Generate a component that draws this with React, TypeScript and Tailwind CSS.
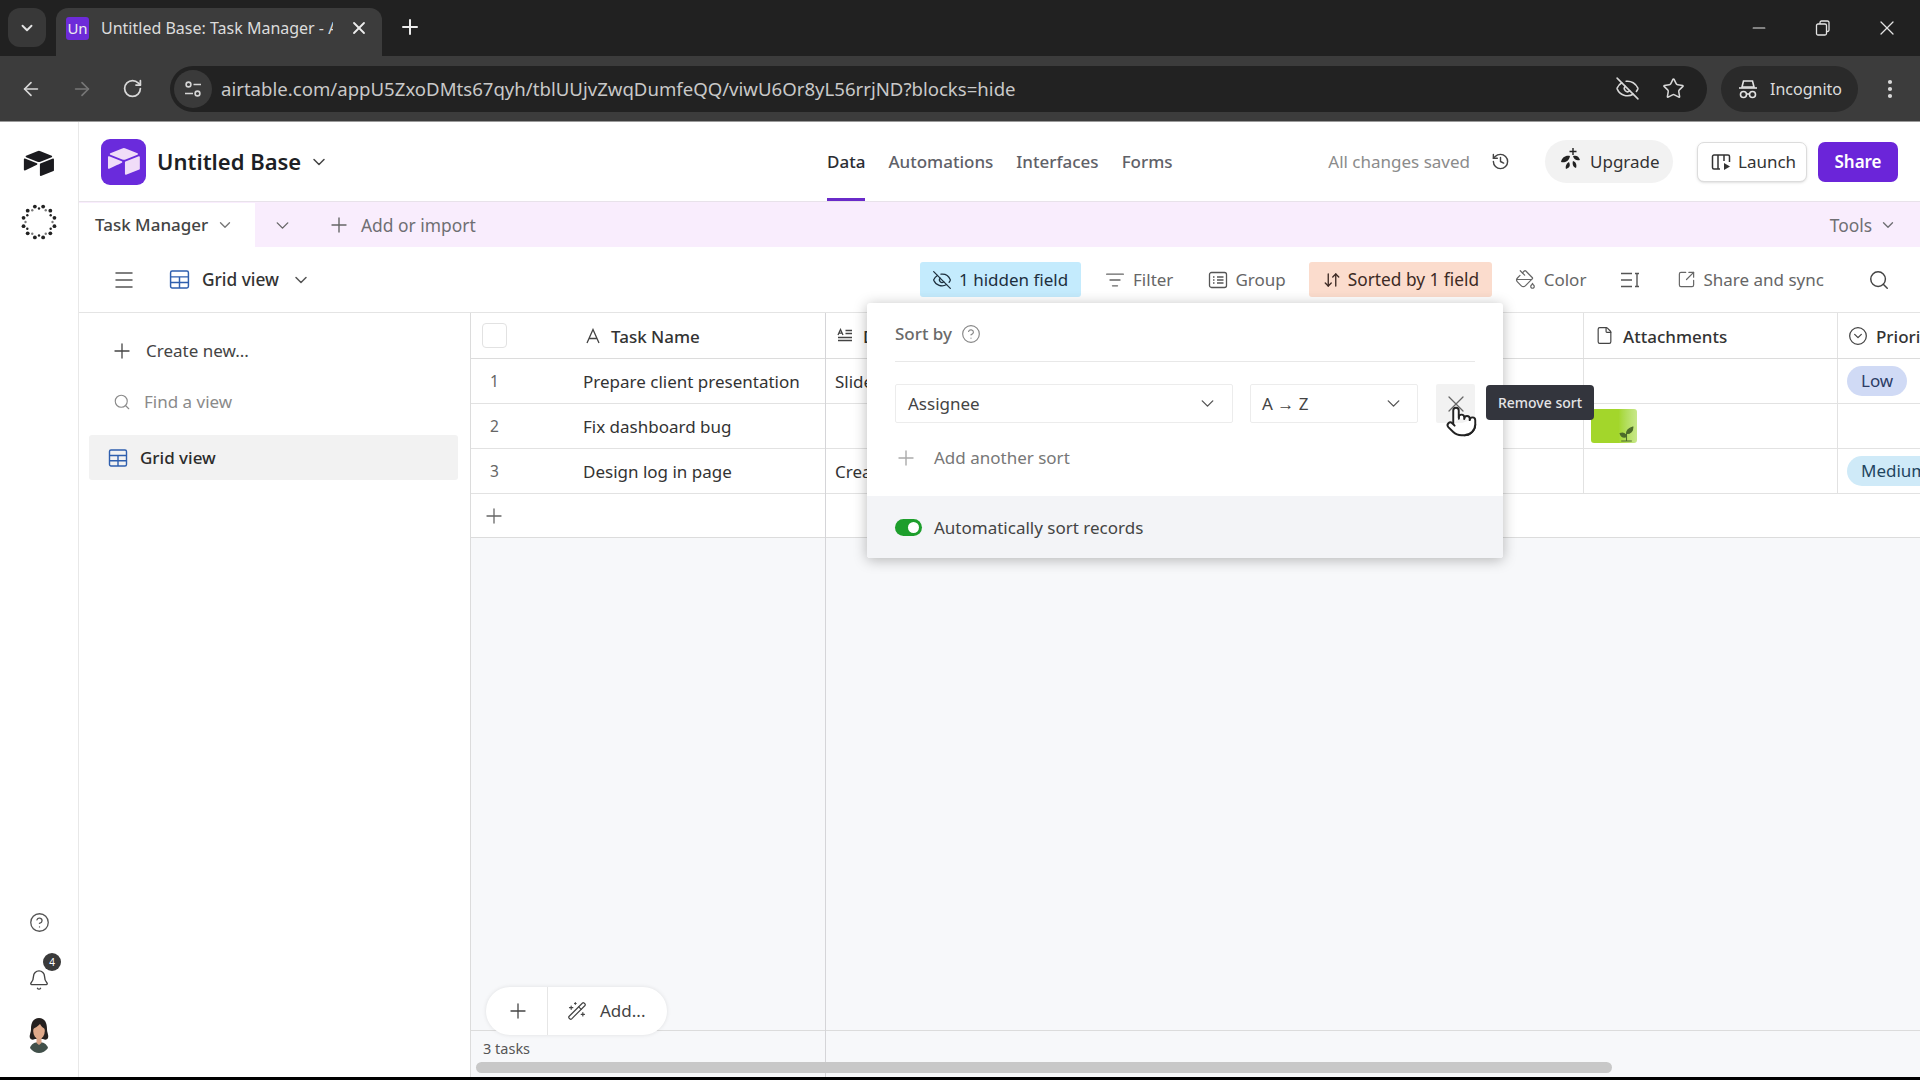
import {
  ArrowLeft,
  ArrowRight,
  Bell,
  ChevronDown,
  CircleChevronDown,
  CircleHelp,
  EyeOff,
  File,
  History,
  ListFilter,
  Menu,
  Minus,
  MoreVertical,
  PaintBucket,
  Plus,
  Pointer,
  RotateCw,
  Search,
  SquareArrowOutUpRight,
  Star,
  ArrowDownUp,
  WandSparkles,
  X,
} from "lucide-react";

function AirtableMark({ className }: { className?: string }) {
  return (
    <svg viewBox="0 0 200 170" className={className} fill="currentColor">
      <path d="M90.039 12.368 24.079 39.66c-3.667 1.519-3.63 6.729.062 8.192l66.235 26.266a24.58 24.58 0 0 0 18.12 0l66.236-26.266c3.69-1.463 3.729-6.673.06-8.191l-65.958-27.293a24.58 24.58 0 0 0-18.795 0" />
      <path d="M105.312 88.46v65.617c0 3.12 3.147 5.258 6.048 4.108l73.806-28.648a4.42 4.42 0 0 0 2.79-4.108V59.813c0-3.121-3.147-5.258-6.048-4.108l-73.806 28.648a4.42 4.42 0 0 0-2.79 4.108" />
      <path d="M88.078 91.846l-21.904 10.576-2.224 1.075-46.238 22.155c-2.93 1.414-6.672-.722-6.672-3.978V60.088c0-1.178.604-2.195 1.414-2.96a5 5 0 0 1 1.12-.84c1.104-.663 2.68-.84 4.02-.31L87.71 83.76c3.564 1.414 3.844 6.408.368 8.087" />
    </svg>
  );
}

function DotRing() {
  const dots = Array.from({ length: 24 }, (_, i) => {
    const a = (i / 24) * Math.PI * 2;
    const rad = i % 2 ? 16 : 13.5;
    return { x: 18 + Math.cos(a) * rad, y: 18 + Math.sin(a) * rad, r: i % 2 ? 1.9 : 1.2 };
  });
  return (
    <svg viewBox="0 0 36 36" className="w-9 h-9 text-[#222]" fill="currentColor">
      {dots.map((d, i) => (
        <circle key={i} cx={d.x} cy={d.y} r={d.r} opacity={i % 4 === 0 ? 0.6 : 1} />
      ))}
    </svg>
  );
}

function GridIcon({ className }: { className?: string }) {
  return (
    <svg viewBox="0 0 20 20" className={className} fill="none" stroke="#2f5fae" strokeWidth="1.4">
      <rect x="1.5" y="2" width="17" height="16" rx="1.5" />
      <path d="M1.5 7.5h17M1.5 12.8h17M10 7.5V18" />
    </svg>
  );
}

function SiteInfoIcon() {
  return (
    <svg viewBox="0 0 20 20" className="w-5 h-5" fill="none" stroke="#d5d5d5" strokeWidth="1.6">
      <circle cx="5.5" cy="5.5" r="2.4" />
      <path d="M10.5 5.5H18M2 14.5h8" />
      <circle cx="14.5" cy="14.5" r="2.4" />
    </svg>
  );
}

function IncognitoIcon() {
  return (
    <svg viewBox="0 0 22 22" className="w-[22px] h-[22px]" fill="none" stroke="#e3e3e3" strokeWidth="1.6">
      <path d="M6.5 3h9l1.5 6H5z" />
      <path d="M2 10h18" />
      <circle cx="6.5" cy="16.5" r="3" />
      <circle cx="15.5" cy="16.5" r="3" />
      <path d="M9.5 16h3" />
    </svg>
  );
}

function GroupIcon() {
  return (
    <svg viewBox="0 0 20 20" className="w-5 h-5" fill="none" stroke="#555" strokeWidth="1.3">
      <rect x="1.5" y="2.5" width="17" height="15" rx="2" />
      <path d="M5 7h1.5M9 7h6.5M5 10h1.5M9 10h6.5M5 13h1.5M9 13h6.5" />
    </svg>
  );
}

function RowHeightIcon() {
  return (
    <svg viewBox="0 0 20 20" className="w-5 h-5" fill="none" stroke="#555" strokeWidth="1.4">
      <path d="M1 3.5h11M1 10h11M1 16.5h11M15 3.5h4M15 16.5h4M17 3.5v13" />
    </svg>
  );
}

function LaunchIcon() {
  return (
    <svg viewBox="0 0 20 20" className="w-5 h-5" fill="none" stroke="#333" strokeWidth="1.5">
      <path d="M9 17H3a1.5 1.5 0 0 1-1.5-1.5v-11A1.5 1.5 0 0 1 3 3h14a1.5 1.5 0 0 1 1.5 1.5V10M7 3v14M13 3v6" />
      <path d="M13 11l6 3.5-6 3.5z" fill="#333" stroke="none" />
    </svg>
  );
}

function UpgradeIcon() {
  return (
    <svg viewBox="0 0 22 24" className="w-[22px] h-6 -mt-[5px]" fill="#222">
      <path d="M10 9c-4-1-8 1-9 6 3 1 8 0 9-6zM13 9c3-1 6 0 7 4-3 1-6 0-7-4zM9 15c-2 1-4 4-3 7 3-1 5-3 3-7zM13 14c-1 3 0 6 3 7 1-3 0-6-3-7z" />
      <path d="M13 1v7M9.5 4.500h7" stroke="#222" strokeWidth="1.400" fill="none" />
    </svg>
  );
}

function NameFieldIcon() {
  return (
    <svg viewBox="0 0 16 16" className="w-4 h-4" fill="none" stroke="#444" strokeWidth="1.3">
      <path d="M2 15 8 1.500 14 15M4.200 10.500h7.600" />
    </svg>
  );
}

function LongTextIcon() {
  return (
    <svg viewBox="0 0 16 16" className="w-4 h-4" fill="none" stroke="#444" strokeWidth="1.300">
      <path d="M1 7 3.500 1.500 6 7M2 5.200h3M8.500 2.500H15M8.500 5.500H15M1 9.500h14M1 12.500h14" />
    </svg>
  );
}

function Avatar() {
  return (
    <svg viewBox="0 0 28 36" className="w-[28px] h-9">
      <path d="M5 31c1-4 5-6 9-6s8 2 9 6c-2 3-6 5-9 5s-7-2-9-5z" fill="#41504a" />
      <path d="M14 1C8 1 6 6 6 12c0 4-2 6-1 9 1 2 3 2 5 1h8c2 1 4 1 5-1 1-3-1-5-1-9 0-6-2-11-8-11z" fill="#25201f" />
      <path d="M11.500 19h5v7l-2.500 2-2.500-2z" fill="#d7a285" />
      <ellipse cx="14" cy="14" rx="5.800" ry="8" fill="#dfa98a" />
      <path d="M8 12c2-1 5-3 7-5 1 2 3 4 5 5 0-5-2-8-6-8s-6 3-6 8z" fill="#25201f" />
    </svg>
  );
}

function PlantThumb() {
  return (
    <div className="w-[46px] h-[34px] rounded-[3px] bg-gradient-to-r from-[#a3d62b] from-60% to-[#c8e889] flex items-end justify-end pr-[2px] pb-[1px]">
      <svg viewBox="0 0 16 16" className="w-[17px] h-[17px]" fill="#4c6b2a">
        <path d="M8 15V8M2 8c3-1 5 0 6 3-3 1-5 0-6-3zM8 8c0-3 3-5 6-6 0 4-2 6-6 6zM3 15h10" stroke="#4c6b2a" strokeWidth="1" />
      </svg>
    </div>
  );
}

function ChromeBar() {
  return (
    <>
      <div className="h-14 bg-[#212121] flex items-end pl-2 shrink-0">
        <div className="w-[38px] h-[39px] mb-[9px] rounded-xl bg-[#383838] flex items-center justify-center">
          <ChevronDown className="w-[18px] h-[18px] text-[#e3e3e3]" strokeWidth={2.5} />
        </div>
        <div className="ml-[10px] w-[326px] h-12 bg-[#3c3c3c] rounded-t-xl flex items-center pl-[10px] pb-[8px]">
          <div className="w-[23px] h-[23px] rounded-[3px] bg-[#6d2bd9] flex items-center justify-center text-[15px] text-[#eee]">Un</div>
          <span className="ml-3 w-[232px] overflow-hidden whitespace-nowrap text-[16px] text-[#dcdcdc]">Untitled Base: Task Manager - Airtable</span>
          <X className="ml-[16px] w-[20px] h-[20px] text-[#ececec]" strokeWidth={2.2} />
        </div>
        <Plus className="ml-[16px] mb-[17px] w-[24px] h-[24px] text-[#ececec]" strokeWidth={2} />
        <div className="ml-auto flex items-center h-12 mb-[4px] text-[#e3e3e3]">
          <Minus className="w-5 h-5" strokeWidth={1.4} />
          <svg viewBox="0 0 16 16" className="ml-[46px] w-[16px] h-[16px]" fill="none" stroke="#e3e3e3" strokeWidth="1.300">
            <rect x="1.500" y="4" width="10" height="11" rx="1.500" />
            <path d="M5 4V2.500A1.500 1.500 0 0 1 6.500 1h6A1.500 1.500 0 0 1 14 2.500V10a1.500 1.500 0 0 1-1.500 1.500h-1" />
          </svg>
          <X className="ml-[44px] mr-[21px] w-6 h-6" strokeWidth={1.3} />
        </div>
      </div>
      <div className="h-[66px] bg-[#3c3c3c] border-b border-[#9a9a9a] flex items-center shrink-0 pl-[20px]">
        <ArrowLeft className="w-[22px] h-[22px] text-[#d8d8d8]" strokeWidth={1.8} />
        <ArrowRight className="ml-[29px] w-[22px] h-[22px] text-[#777]" strokeWidth={1.8} />
        <RotateCw className="ml-[29px] w-[21px] h-[21px] text-[#d8d8d8]" strokeWidth={2} />
        <div className="ml-[27px] w-[1537px] h-[46px] bg-[#222222] rounded-full flex items-center">
          <div className="w-[38px] h-[38px] ml-1 rounded-full bg-[#3a3a3a] flex items-center justify-center">
            <SiteInfoIcon />
          </div>
          <span className="ml-[9px] text-[18.600px] text-[#c9c9c9] whitespace-nowrap">airtable.com/appU5ZxoDMts67qyh/tblUUjvZwqDumfeQQ/viwU6Or8yL56rrjND?blocks=hide</span>
          <EyeOff className="ml-auto w-[25px] h-[25px] text-[#d8d8d8]" strokeWidth={1.500} />
          <Star className="ml-[22px] mr-[22px] w-[23px] h-[23px] text-[#d8d8d8]" strokeWidth={1.600} />
        </div>
        <div className="ml-[14px] w-[137px] h-[46px] bg-[#2a2a2a] rounded-full flex items-center pl-[16px]">
          <IncognitoIcon />
          <span className="ml-[11px] text-[16px] text-[#dcdcdc]">Incognito</span>
        </div>
        <MoreVertical className="ml-[20px] w-[24px] h-[24px] text-[#d8d8d8]" strokeWidth={2.200} />
      </div>
    </>
  );
}

function Rail() {
  return (
    <div className="w-[79px] shrink-0 border-r border-[#e8e8e8] flex flex-col items-center pt-[27px] pb-[24px]">
      <AirtableMark className="w-[34px] h-[29px] text-[#1b1b1f]" />
      <div className="mt-[26px]">
        <DotRing />
      </div>
      <CircleHelp className="mt-auto w-[21px] h-[21px] text-[#555]" strokeWidth={1.500} />
      <div className="relative mt-[36px]">
        <Bell className="w-[22px] h-[22px] text-[#444]" strokeWidth={1.500} />
        <span className="absolute -top-[16px] left-[15px] w-[18px] h-[18px] rounded-full bg-[#3a3a3a] text-white text-[10px] flex items-center justify-center">4</span>
      </div>
      <div className="mt-[26px]">
        <Avatar />
      </div>
    </div>
  );
}

function TopHeader() {
  return (
    <div className="h-20 shrink-0 border-b border-[#e8e2ea] flex items-stretch pl-[22px] pr-[22px]">
      <div className="w-[726px] flex items-center">
        <div className="w-[45px] h-[46px] rounded-[9px] bg-[#6a2bdc] flex items-center justify-center">
          <AirtableMark className="w-[36px] h-[31px] text-[#f0dcf8]" />
        </div>
        <span className="ml-[11px] text-[22px] font-semibold text-[#1d1f25]">Untitled Base</span>
        <ChevronDown className="ml-[8px] w-[20px] h-[20px] text-[#444]" strokeWidth={1.800} />
      </div>
      <nav className="flex items-stretch gap-[23px] text-[17px] font-medium text-[#5f6168]">
        <div className="border-b-[3px] border-[#6a2bc9] flex items-center pt-[3px] text-[#2b2d33]">Data</div>
        <div className="flex items-center">Automations</div>
        <div className="flex items-center">Interfaces</div>
        <div className="flex items-center">Forms</div>
      </nav>
      <div className="ml-auto flex items-center">
        <span className="text-[17px] text-[#8b8b8b]">All changes saved</span>
        <History className="ml-[21px] w-[19px] h-[19px] text-[#444]" strokeWidth={1.800} />
        <div className="ml-[35px] w-[128px] h-[43px] rounded-full bg-[#f2f2f2] flex items-center pl-[15px] text-[17px] text-[#333]">
          <UpgradeIcon />
          <span className="ml-[8px]">Upgrade</span>
        </div>
        <div className="ml-[24px] w-[110px] h-[40px] rounded-[7px] border border-[#dcdcdc] bg-white shadow-sm flex items-center pl-[13px] text-[17px] text-[#333]">
          <LaunchIcon />
          <span className="ml-[7px]">Launch</span>
        </div>
        <div className="ml-[11px] w-[80px] h-[40px] rounded-[7px] bg-[#6b25d9] text-white text-[17px] font-semibold flex items-center justify-center">Share</div>
      </div>
    </div>
  );
}

function TableTabs() {
  return (
    <div className="h-[45px] shrink-0 flex items-stretch bg-[#f9edfd] text-[17px] pt-[1px]">
      <div className="w-[176px] bg-white flex items-center pl-[16px] font-medium text-[#444]">
        Task Manager
        <ChevronDown className="ml-[8px] w-[18px] h-[18px] text-[#777]" strokeWidth={1.800} />
      </div>
      <div className="flex items-center pl-[17px]">
        <ChevronDown className="w-[21px] h-[21px] text-[#666]" strokeWidth={1.600} />
        <Plus className="ml-[34px] w-[24px] h-[24px] text-[#666]" strokeWidth={1.400} />
        <span className="ml-[10px] text-[17.400px] text-[#6f6f73]">Add or import</span>
      </div>
      <div className="ml-auto flex items-center pr-[23px] text-[17.400px] text-[#6f6f73]">
        Tools
        <ChevronDown className="ml-[7px] w-[18px] h-[18px]" strokeWidth={1.800} />
      </div>
    </div>
  );
}

function ViewBar() {
  return (
    <div className="h-[66px] shrink-0 border-b border-[#e4e4e4] flex items-center text-[17px] text-[#666]">
      <Menu className="ml-[33px] w-[24px] h-[24px] text-[#555]" strokeWidth={1.500} />
      <GridIcon className="ml-[33px] w-[21px] h-[21px]" />
      <span className="ml-[12px] text-[17.300px] font-medium text-[#333]">Grid view</span>
      <ChevronDown className="ml-[12px] w-[20px] h-[20px] text-[#555]" strokeWidth={1.800} />
      <div className="ml-[609px] w-[161px] h-[35px] rounded-[3px] bg-[#c4ebfd] flex items-center pl-[12px] text-[#1d2f3d]">
        <EyeOff className="w-5 h-5" strokeWidth={1.500} />
        <span className="ml-[7px]">1 hidden field</span>
      </div>
      <ListFilter className="ml-[24px] w-5 h-5 text-[#666]" strokeWidth={1.600} />
      <span className="ml-[8px]">Filter</span>
      <div className="ml-[35px]"><GroupIcon /></div>
      <span className="ml-[7px]">Group</span>
      <div className="ml-[23px] w-[183px] h-[35px] rounded-[3px] bg-[#fbdccd] flex items-center pl-[14px] text-[#3d2a24]">
        <ArrowDownUp className="w-[18px] h-[18px]" strokeWidth={1.800} />
        <span className="ml-[7px] text-[17.300px]">Sorted by 1 field</span>
      </div>
      <PaintBucket className="ml-[23px] w-[21px] h-[21px] text-[#666]" strokeWidth={1.400} />
      <span className="ml-[8px]">Color</span>
      <div className="ml-[34px]"><RowHeightIcon /></div>
      <SquareArrowOutUpRight className="ml-[37px] w-[19px] h-[19px] text-[#666]" strokeWidth={1.500} />
      <span className="ml-[7px]">Share and sync</span>
      <Search className="ml-[44px] w-[22px] h-[22px] text-[#444]" strokeWidth={1.600} />
    </div>
  );
}

function Sidebar() {
  return (
    <div className="w-[392px] shrink-0 border-r border-[#dcdcdc] pl-[10px] pr-[12px] pt-[17px] text-[17px]">
      <div className="flex items-center h-[42px] pl-[21px] text-[#444]">
        <Plus className="w-[24px] h-[24px]" strokeWidth={1.300} />
        <span className="ml-[12px]">Create new...</span>
      </div>
      <div className="flex items-center h-[42px] mt-[8px] pt-[2px] pl-[24px] text-[#8a8a8a]">
        <Search className="w-[18px] h-[18px]" strokeWidth={1.500} />
        <span className="ml-[13px]">Find a view</span>
      </div>
      <div className="flex items-center h-[45px] mt-[13px] rounded-[3px] bg-[#f2f2f2] pl-[19px] font-medium text-[#2c2c2c]">
        <GridIcon className="w-[20px] h-[20px]" />
        <span className="ml-[12px]">Grid view</span>
      </div>
    </div>
  );
}

const rows = [
  { id: 1, name: "Prepare client presentation", note: "Slides" },
  { id: 2, name: "Fix dashboard bug", note: "" },
  { id: 3, name: "Design log in page", note: "Create" },
];

function PrimaryColumn() {
  return (
    <div className="w-[355px] shrink-0 border-r border-[#d5d5d8] flex flex-col">
      <div className="h-[46px] shrink-0 bg-white border-b border-[#dcdcdc] flex items-center pl-[11px]">
        <div className="w-[25px] h-[25px] rounded-[4px] border border-[#e2e2e2] bg-white" />
        <div className="ml-[78px]"><NameFieldIcon /></div>
        <span className="ml-[10px] pt-[2px] text-[17px] font-medium text-[#333]">Task Name</span>
      </div>
      {rows.map((r) => (
        <div key={r.id} className="h-[45px] shrink-0 bg-white border-b border-[#e2e2e2] flex items-center pt-[2px] text-[17px] text-[#333]">
          <span className="w-[112px] pl-[19px] text-[15.500px] text-[#666]">{r.id}</span>
          {r.name}
        </div>
      ))}
      <div className="h-[44px] shrink-0 bg-white border-b border-[#dcdcdc] flex items-center pl-[11px]">
        <Plus className="w-[24px] h-[24px] text-[#666]" strokeWidth={1.300} />
      </div>
      <div className="flex-1" />
      <div className="h-[47px] shrink-0 border-t border-[#dcdcdc] pl-[12px] pt-[7px] text-[14.500px] text-[#555]">3 tasks</div>
    </div>
  );
}

function RestColumns() {
  return (
    <div className="flex-1 min-w-0 overflow-hidden flex flex-col">
      <div className="h-[46px] shrink-0 bg-white border-b border-[#dcdcdc] flex items-stretch text-[17px] font-medium text-[#333]">
        <div className="w-[758px] shrink-0 border-r border-[#e2e2e2] flex items-center pl-[11px]">
          <LongTextIcon />
          <span className="ml-[10px] pt-[2px] w-[14px] overflow-hidden whitespace-nowrap">Description</span>
        </div>
        <div className="w-[254px] shrink-0 border-r border-[#e2e2e2] flex items-center pl-[11px]">
          <File className="w-[19px] h-[19px] text-[#444]" strokeWidth={1.500} />
          <span className="ml-[9px] pt-[2px]">Attachments</span>
        </div>
        <div className="flex-1 flex items-center pl-[10px] whitespace-nowrap">
          <CircleChevronDown className="w-[20px] h-[20px] text-[#444]" strokeWidth={1.500} />
          <span className="ml-[8px] pt-[2px]">Priority</span>
        </div>
      </div>
      {rows.map((r) => (
        <div key={r.id} className="h-[45px] shrink-0 bg-white border-b border-[#e2e2e2] flex items-stretch text-[17px] text-[#333]">
          <div className="w-[758px] shrink-0 border-r border-[#e2e2e2] flex items-center pl-[9px] pt-[2px]">{r.note}</div>
          <div className="w-[254px] shrink-0 border-r border-[#e2e2e2] flex items-center pl-[7px]">
            {r.id === 2 && <PlantThumb />}
          </div>
          <div className="flex-1 flex items-center pl-[9px] whitespace-nowrap">
            {r.id === 1 && <span className="h-[30px] px-[14px] rounded-full bg-[#d0daf5] text-[#2c3c66] flex items-center">Low</span>}
            {r.id === 3 && <span className="h-[30px] px-[14px] rounded-full bg-[#cfeaf8] text-[#1f4560] flex items-center">Medium</span>}
          </div>
        </div>
      ))}
      <div className="h-[44px] shrink-0 bg-white border-b border-[#dcdcdc]" />
      <div className="flex-1" />
      <div className="h-[47px] shrink-0 border-t border-[#dcdcdc]" />
    </div>
  );
}

function SortPopover() {
  return (
    <div className="absolute left-[396px] -top-[10px] w-[636px] h-[255px] rounded-[3px] bg-white shadow-[0_2px_14px_rgba(0,0,0,0.28)] flex flex-col overflow-hidden">
      <div className="flex-1 px-[28px] text-[17px]">
        <div className="h-[59px] border-b border-[#e8e8e8] flex items-center pt-[4px] text-[#6a6a6a] font-medium">
          Sort by
          <CircleHelp className="ml-[9px] w-[20px] h-[20px] text-[#888]" strokeWidth={1.400} />
        </div>
        <div className="mt-[22px] flex items-stretch h-[39px] text-[#444]">
          <div className="w-[338px] rounded-[2px] border border-[#ececec] flex items-center pl-[12px] pr-[14px]">
            Assignee
            <ChevronDown className="ml-auto w-[21px] h-[21px] text-[#555]" strokeWidth={1.600} />
          </div>
          <div className="ml-[17px] w-[168px] rounded-[2px] border border-[#ececec] flex items-center pl-[11px] pr-[13px]">
            A → Z
            <ChevronDown className="ml-auto w-[21px] h-[21px] text-[#555]" strokeWidth={1.600} />
          </div>
          <div className="ml-[18px] w-[39px] bg-[#f2f2f2] rounded-[2px] flex items-center justify-center">
            <X className="w-[28px] h-[28px] text-[#666]" strokeWidth={1.100} />
          </div>
        </div>
        <div className="mt-[23px] flex items-center h-[24px] text-[#777]">
          <Plus className="-ml-[1px] w-[24px] h-[24px] text-[#aaa]" strokeWidth={1.400} />
          <span className="ml-[16px]">Add another sort</span>
        </div>
      </div>
      <div className="h-[62px] shrink-0 bg-[#f3f4f7] flex items-center pl-[28px] pt-[1px] text-[17px] text-[#444]">
        <div className="w-[27px] h-[17px] rounded-full bg-[#1d9e2c] flex items-center justify-end pr-[3px]">
          <div className="w-[11px] h-[11px] rounded-full bg-white" />
        </div>
        <span className="ml-[12px]">Automatically sort records</span>
      </div>
    </div>
  );
}

function GridArea() {
  return (
    <div className="relative flex-1 min-w-0 bg-[#f7f8fa] flex items-stretch">
      <PrimaryColumn />
      <RestColumns />
      <SortPopover />
      <div className="absolute left-[1015px] top-[72px] w-[108px] h-[35px] rounded-[4px] bg-[#33353d] text-[#e4e4e6] text-[14px] font-medium flex items-center justify-center">Remove sort</div>
      <Pointer className="absolute left-[974px] top-[91px] w-[33px] h-[35px] text-[#222] fill-white" strokeWidth={1.400} />
      <div className="absolute left-[15px] bottom-[42px] h-[48px] w-[181px] rounded-full bg-white shadow-[0_0_4px_rgba(0,0,0,0.1)] flex items-center">
        <div className="w-[62px] h-full border-r border-[#e6e6e6] flex items-center justify-center pl-[2px]">
          <Plus className="w-[24px] h-[24px] text-[#444]" strokeWidth={1.300} />
        </div>
        <WandSparkles className="ml-[19px] w-[20px] h-[20px] text-[#444]" strokeWidth={1.400} />
        <span className="ml-[13px] text-[17px] text-[#444]">Add...</span>
      </div>
      <div className="absolute left-[5px] bottom-[4px] w-[1136px] h-[11px] rounded-full bg-[#c8c8c8]" />
    </div>
  );
}

export default function App() {
  return (
    <div className="w-[1920px] h-[1080px] overflow-hidden flex flex-col bg-white font-['Noto_Sans',sans-serif]">
      <ChromeBar />
      <div className="flex-1 min-h-0 flex">
        <Rail />
        <div className="flex-1 min-w-0 flex flex-col">
          <TopHeader />
          <TableTabs />
          <ViewBar />
          <div className="flex-1 min-h-0 flex">
            <Sidebar />
            <GridArea />
          </div>
        </div>
      </div>
      <div className="h-[3px] shrink-0 bg-black" />
    </div>
  );
}
